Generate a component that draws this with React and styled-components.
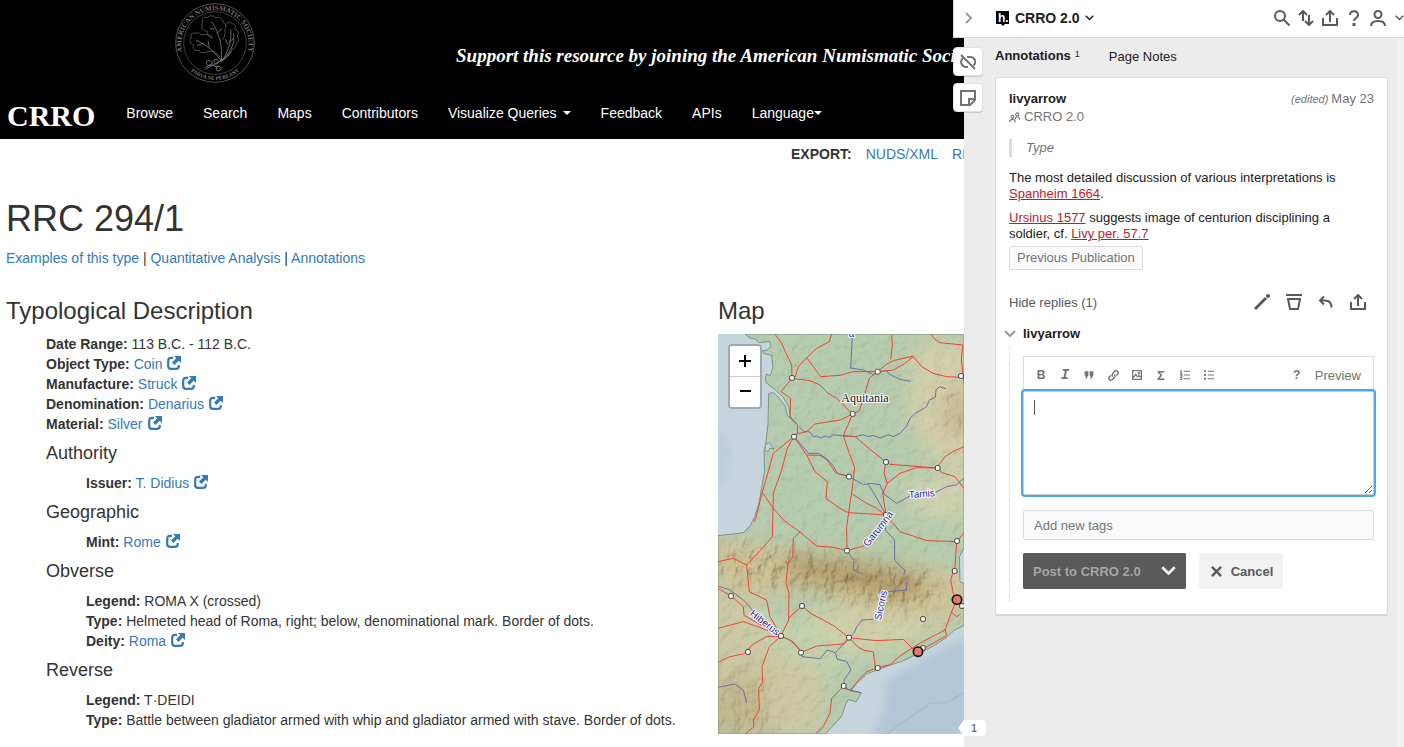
import React from "react";
import styled, { createGlobalStyle } from "styled-components";

const GlobalStyle = createGlobalStyle`
  * {
    box-sizing: border-box;
  }
  body {
    margin: 0;
    background: #fff;
    color: #333;
    font-family: "Liberation Sans", Arial, sans-serif;
    font-size: 14px;
    line-height: 20px;
  }
  button, input, textarea {
    font-family: inherit;
  }
`

const Shell = styled.div`
  display: flex;
  min-height: 100vh;
  overflow: hidden;
`
const Page = styled.main`
  flex: 1;
  min-width: 0;
  overflow: hidden;
`
const Link = styled.a`
  color: #337ab7;
  text-decoration: none;
`

/* ---------- header ---------- */
const Header = styled.header`
  background: #000;
  color: #fff;
  padding: 3px 0 1px;
`
const Banner = styled.div`
  display: grid;
  grid-template-columns: 430px 1fr;
  align-items: center;
  height: 85px;
`
const Seal = styled.svg`
  width: 80px;
  height: 80px;
  justify-self: center;
  align-self: start;
`
const Slogan = styled.a`
  padding: 20px 0 0 26px;
  color: #fff;
  font: italic bold 19px/28px "Liberation Serif", serif;
  text-decoration: none;
  white-space: nowrap;
`
const Nav = styled.nav`
  display: flex;
  align-items: center;
  height: 50px;
  padding-left: 7px;
`
const Brand = styled.a`
  margin-right: 16px;
  padding-top: 6px;
  color: #fff;
  font: bold 30px/30px "Liberation Serif", serif;
  text-decoration: none;
`
const NavLink = styled.a`
  display: flex;
  align-items: center;
  gap: ${(p) => (p.$tight ? "0" : "6px")};
  padding: 15px;
  color: #fff;
  text-decoration: none;
  white-space: nowrap;
`
const Caret = styled.span`
  border: 4px solid transparent;
  border-top-color: #fff;
  border-bottom: 0;
`

/* ---------- record ---------- */
const Exports = styled.div`
  display: flex;
  gap: 14px;
  padding: 5px 0 0 791px;
  white-space: nowrap;
`
const Record = styled.div`
  padding-left: 6px;
`
const Title = styled.h1`
  margin: 35px 0 9px;
  font-size: 36px;
  font-weight: normal;
  line-height: 40px;
`
const Columns = styled.div`
  display: grid;
  grid-template-columns: 1fr 246px;
  margin-top: 30px;
`
const SectionTitle = styled.h3`
  margin: 0 0 10px;
  font-size: 24px;
  font-weight: normal;
  line-height: 26px;
`
const Group = styled.section`
  padding-left: 40px;
`
const GroupTitle = styled.h4`
  margin: 10px 0;
  font-size: 18px;
  font-weight: normal;
  line-height: 19px;
`
const List = styled.ul`
  margin: 0;
  padding: 0 0 0 ${(p) => (p.$nested ? "40px" : "0")};
  list-style: none;
`

/* ---------- map ---------- */
const MapBox = styled.div`
  position: relative;
  height: 400px;
  overflow: hidden;
`
const MapSvg = styled.svg`
  display: block;
  width: 246px;
  height: 400px;
`
const Zoom = styled.div`
  position: absolute;
  top: 10px;
  left: 10px;
  border: 2px solid rgba(0, 0, 0, 0.2);
  border-radius: 4px;
`
const ZoomButton = styled.button`
  display: block;
  width: 30px;
  height: ${(p) => (p.$first ? "31px" : "30px")};
  padding: 0;
  border: 0;
  border-bottom: ${(p) => (p.$first ? "1px solid #ccc" : "0")};
  border-radius: ${(p) => (p.$first ? "2px 2px 0 0" : "0 0 2px 2px")};
  background: #fff;
  color: #000;
`

/* ---------- sidebar ---------- */
const Sidebar = styled.aside`
  position: relative;
  width: 440px;
  background: #ececec;
  border-right: 7px solid #f0f0f0;
  color: #202020;
  font-size: 13px;
  line-height: 18px;
`
const TopBar = styled.div`
  display: flex;
  align-items: center;
  height: 38px;
  margin-right: -7px;
  padding: 0 0 2px 31px;
  border-bottom: 1px solid #dbdbdb;
  background: #fff;
`
const IconButton = styled.button`
  display: flex;
  align-items: center;
  justify-content: center;
  width: 24px;
  height: 24px;
  padding: 0;
  border: 0;
  background: none;
  color: ${(p) => p.$color || "#595959"};
  font: ${(p) => p.$font || "inherit"};
`
const MenuArrow = styled(IconButton)`
  justify-content: flex-end;
  width: 14px;
`
const GroupButton = styled.button`
  display: flex;
  align-items: center;
  gap: 5px;
  margin-right: auto;
  padding: 0;
  border: 0;
  background: none;
  color: #202020;
  font-size: 14px;
  font-weight: bold;
`
const Handle = styled.div`
  position: absolute;
  top: 0;
  left: -11px;
  display: flex;
  flex-direction: column;
  gap: 7px;
`
const HandleToggle = styled.button`
  display: flex;
  align-items: center;
  justify-content: center;
  width: 32px;
  height: 38px;
  margin-bottom: 2px;
  padding: 0 4px 2px 0;
  border: 1px solid #dbdbdb;
  border-width: 0 0 1px 1px;
  background: #fff;
  color: #9c9c9c;
`
const HandleButton = styled.button`
  display: flex;
  align-items: center;
  justify-content: center;
  width: 30px;
  height: 29px;
  padding: 0;
  border: 1px solid #e3e3e3;
  border-radius: 4px;
  background: #fff;
  color: #737373;
  box-shadow: 0 1px 1px rgba(0, 0, 0, 0.15);
`
const Bucket = styled.button`
  position: absolute;
  left: -6px;
  bottom: 11px;
  width: 28px;
  height: 16px;
  padding: 0 0 0 4px;
  border: 0;
  border-radius: 3px;
  background: #fff;
  clip-path: polygon(0 50%, 6px 0, 100% 0, 100% 100%, 6px 100%);
  color: #737373;
  font-size: 10px;
  font-weight: bold;
`
const Tabs = styled.div`
  display: flex;
  align-items: flex-start;
  gap: 29px;
  height: 39px;
  padding: 9px 0 0 31px;
`
const Tab = styled.button`
  display: flex;
  gap: 4px;
  padding: 0;
  border: 0;
  background: none;
  color: #202020;
  font-size: 13px;
  font-weight: ${(p) => (p.$active ? "bold" : "normal")};
  line-height: ${(p) => (p.$active ? 18 : 20)}px;
`
const Count = styled.span`
  font-size: 9px;
  font-weight: normal;
  line-height: 15px;
`
const Card = styled.article`
  margin: 0 9px 0 31px;
  padding: 12px 13px;
  border: 1px solid #dbdbdb;
  border-radius: 2px;
  background: #fff;
  box-shadow: 0 1px 1px rgba(0, 0, 0, 0.1);
`
const Row = styled.div`
  display: flex;
  align-items: center;
  gap: ${(p) => p.$gap || 0}px;
  margin-left: ${(p) => (p.$end ? "auto" : "0")};
`
const User = styled.strong`
  flex: 1;
  color: #202020;
`
const Muted = styled.span`
  color: #737373;
`
const Edited = styled.em`
  margin-right: 3px;
  font-size: 11px;
`
const Quote = styled.blockquote`
  margin: 13px 0;
  padding-left: 14px;
  border-left: 3px solid #dbdbdb;
  color: #737373;
  font-style: italic;
`
const Text = styled.p`
  margin: 0 0 ${(p) => (p.$last ? 4 : 8)}px;
  line-height: 16px;
  a {
    color: #bd1c2b;
  }
`
const Tag = styled.a`
  display: inline-block;
  padding: 2px 7px;
  border: 1px solid #dbdbdb;
  border-radius: 2px;
  background: #fafafa;
  color: #737373;
  text-decoration: none;
`
const Actions = styled.div`
  display: flex;
  align-items: center;
  gap: 8px;
  height: 24px;
  margin: 20px 4px 11px 0;
`
const TextButton = styled.button`
  margin-right: ${(p) => (p.$push ? "auto" : "0")};
  padding: 0;
  border: 0;
  background: none;
  color: ${(p) => p.$color || "#737373"};
  font-size: 13px;
`
const Thread = styled.div`
  display: grid;
  grid-template-columns: 19px 1fr;
  margin-left: -5px;
`
const Collapse = styled.button`
  display: flex;
  align-items: center;
  padding: 0;
  border: 0;
  background: none;
  color: #9c9c9c;
`
const Line = styled.div`
  margin: 4px 0 0 5px;
  border-left: 1px dashed #dbdbdb;
`
const Editor = styled.form`
  display: flex;
  flex-direction: column;
  padding: 13px 0;
`
const Tools = styled.div`
  display: flex;
  align-items: center;
  height: 35px;
  padding: 2px 12px 0 5px;
  border: 1px solid #dbdbdb;
  border-bottom: 0;
`
const TextArea = styled.textarea`
  display: block;
  width: 100%;
  height: 104px;
  padding: 8px 10px;
  border: 1px solid #ccc;
  border-radius: 2px;
  outline: none;
  box-shadow: 0 0 0 2px #51a7e8;
  background: linear-gradient(#555, #555) 10px 8px / 1px 15px no-repeat #fff;
  caret-color: transparent;
  font-size: 13px;
  resize: vertical;
`
const TagInput = styled.input`
  height: 30px;
  margin: 15px 0 13px;
  padding: 0 10px;
  border: 1px solid #dbdbdb;
  border-radius: 2px;
  background: #fafafa;
  font-size: 13px;
  &::placeholder {
    color: #757575;
  }
`
const Split = styled.div`
  display: flex;
  border-radius: 2px;
  background: #595959;
`
const Button = styled.button`
  display: flex;
  align-items: center;
  gap: 9px;
  height: 36px;
  padding: ${(p) => p.$pad || "0 10px"};
  border: 0;
  border-radius: 2px;
  background: ${(p) => (p.$dark ? "#595959" : "#f2f2f2")};
  color: ${(p) => p.$color || "#595959"};
  font-size: 13px;
  font-weight: bold;
`

/* ---------- icons ---------- */
const IconSvg = styled.svg`
  display: block;
  flex: none;
`
const Icon = ({ size = 16, h, box = "0 0 16 16", sw = 2, children }) => (
  <IconSvg
    width={size}
    height={h || size}
    viewBox={box}
    fill="none"
    stroke="currentColor"
    strokeWidth={sw}
    aria-hidden="true"
  >
    {children}
  </IconSvg>
)
const Chevron = ({ size = 9, sw = 2 }) => (
  <Icon size={size} h={Math.round(size * 0.66)} box="0 0 12 8" sw={sw}>
    <path d="M1 1l5 5 5-5" />
  </Icon>
)
const ShareIcon = () => (
  <Icon>
    <path d="M1 8v7h14V8M8 12V1M4 5l4-4 4 4" />
  </Icon>
)
const NewWindow = styled(({ className }) => (
  <svg className={className} viewBox="0 0 14 14" aria-hidden="true">
    <path d="M6 1.800H4Q1.200 1.800 1.200 4.600v5.400q0 2.800 2.800 2.800h5q2.800 0 2.800-2.800V9" fill="none" stroke="#337ab7" strokeWidth="2.200" />
    <path d="M7 0h7v7l-2.300-2.300L7.400 9 5 6.600l4.300-4.300z" fill="#337ab7" />
  </svg>
))`
  width: 14px;
  height: 14px;
  margin-left: 5px;
  vertical-align: -1px;
`

const AnsSeal = () => (
  <Seal viewBox="525 9 240 240" fill="none" stroke="#606060" strokeWidth="2.500" role="img" aria-label="American Numismatic Society">
    <circle cx="645" cy="129" r="118" />
    <circle cx="645" cy="129" r="94" strokeWidth="2" />
    <path id="arcTop" d="M550 166A101 101 0 1 1 740 166" stroke="none" />
    <path id="arcBottom" d="M555 194A111 111 0 0 0 735 194" stroke="none" />
    <g fill="#767676" stroke="none" fontFamily="Liberation Serif, serif" fontWeight="bold">
      <text fontSize="21">
        <textPath href="#arcTop" startOffset="50%" textAnchor="middle">AMERICAN NUMISMATIC SOCIETY</textPath>
      </text>
      <text fontSize="16">
        <textPath href="#arcBottom" startOffset="50%" textAnchor="middle">PARVA NE PEREANT</textPath>
      </text>
    </g>
    <path d="M664 180C655 160 640 150 622 155c-10 6-22 4-25-4-14 4-22-8-16-16-12-3-14-17-6-22-7-8 0-16 10-13 8-4 16-1 18 5 14-4 28-2 36 9M639 114c-12-1-20-10-17-20-14-2-22-14-14-23-5-12 2-20 14-19 6-6 20-6 24 1 13-3 24 4 23 14 10 4 11 16 5 22 4 12-1 22-6 30M676 78c2-11 14-14 20-7 10 0 12 8 8 15 12 5 14 15 7 22 8 8 5 19-3 22 2 10-5 17-12 18-4 14-14 24-30 31" />
    <path d="M664 184c2-30 0-60-10-80-4-12-10-28-20-40M650 100l16-14M644 88l-16-4M664 184c-16-24-36-44-76-64M628 142l-4-20M610 130l-18 6M666 184c14-24 30-52 26-96M686 126l16-10M684 134l-8-16M700 100c6 26-4 50-32 82M616 208l54-30M670 180l24-24" stroke="#7c7c7c" />
    <path d="M620 184c8-6 18 0 16 8-10 8-20 2-16-8zM642 180c8-4 16 0 14 8-8 8-16 2-14-8zM650 200c8-4 16 2 12 10-8 6-16 0-12-10zM634 196l20 4M616 202l18-8" strokeWidth="3" stroke="#7c7c7c" />
  </Seal>
)

/* the map is drawn at three units to the pixel */
const land =
  "M135 132L150 144 165 147 178 158 208 154 213 168 202 180 188 182 190 190 215 196 219 232 210 258 200 252 196 262 198 278 222 296 250 322 266 350 270 378 288 402 262 376 256 348 232 318 218 306 206 312 204 400 198 456 192 486 194 540 184 600 176 642 164 680 150 708 130 728 100 732 54 737V1332H376L398 1308 424 1280 438 1240 446 1228 468 1236 484 1208 452 1204 470 1180 500 1152 540 1136 610 1112 660 1088 700 1068 740 1042 764 1020 792 1006V880L780 876 778 800 792 774V132Z"

const roads = [
  "M225 132L245 160 258 190 275 225 276 263",
  "M395 132L388 155 350 175 320 203 295 230 285 262",
  "M320 203L362 260 420 256 460 245 533 245 560 222 580 212 640 198",
  "M575 132L577 165 572 208M533 245L580 240 612 222 640 200 665 230 700 250 740 260 783 262",
  "M692 132L705 148 720 158 788 165 784 210 792 280",
  "M276 265L330 272 360 285 382 308 410 325 458 372",
  "M276 265L243 305 272 325 270 380 292 404 292 430 282 440",
  "M533 245L508 265 492 320 478 362 458 372 430 437 448 490 464 532 456 600 446 668 440 710 441 782",
  "M458 372L420 390 345 402 320 425 290 432 282 440",
  "M430 437L466 440 500 470 558 516 570 523 713 534",
  "M713 530L735 500 760 484 792 470",
  "M558 516L552 550 562 580 548 610 558 675",
  "M562 580L600 550 650 533 713 534 725 548 765 560 792 595",
  "M282 440L320 495 360 496 382 510 406 548 447 560",
  "M282 440L220 490 206 540 186 610 168 682 162 696",
  "M282 440L262 475 242 550 220 610 217 740 178 785 140 825 120 815 100 805 54 815",
  "M320 495L345 545 382 575 378 625 420 655 445 668 558 675",
  "M186 606L220 655 250 690 300 726 350 768 400 772 441 782",
  "M454 610L500 640 530 655 558 675",
  "M300 726L280 745 278 800 264 820 258 880 267 910 266 990 243 1038",
  "M441 782L490 768 530 730 558 675 600 725 680 752 770 755 792 728",
  "M770 753L765 830 752 870 760 910 770 930",
  "M140 825L148 905 200 930 210 980 243 1038",
  "M54 895L93 918 130 950 132 976 175 1000 243 1038",
  "M54 1015L130 995 200 1020 243 1038",
  "M54 1117L90 1100 130 1092 160 1062 200 1040 243 1038",
  "M243 1038L208 1070 186 1130 188 1176 176 1196 178 1260 160 1290 162 1310 135 1332",
  "M265 985L306 948 335 972 370 990 402 1008 447 1043 530 1052 610 1048 640 1078 654 1085",
  "M447 1043L432 1062 350 1068 303 1088 280 1056 243 1038",
  "M447 1043L475 1072 495 1082 520 1085 526 1134",
  "M431 1188L450 1202 480 1165 500 1145 533 1133 570 1124 600 1098 640 1072 668 1055 735 1020 755 965 770 930",
  "M668 1078L740 1036 735 1018M752 965L770 980 782 972",
  "M431 1188L395 1225 390 1268 370 1310 346 1332",
]
const rivers = [
  "M457 140L452 234 490 240 520 254 560 240 566 252 600 268 632 274",
  "M738 296L718 290 708 300 706 322 688 330 680 350 646 370 630 385 620 408 600 430 580 440 564 434 540 444 520 436 504 440 490 434 466 440 430 438 400 434 388 442 376 438 362 444 350 438 340 440 330 426 312 424 298 412",
  "M282 440L326 490 356 490 380 506 400 528 412 550 447 560 490 584 512 580 540 584 552 612 590 640 630 618",
  "M504 582L530 624 558 675 556 720 584 750 584 812 614 840 612 856",
  "M700 610L740 590 770 584 792 564",
  "M617 872L620 900 560 906M520 988L486 990 470 1010 462 1030 440 1052 406 1088 412 1108 440 1114 453 1140 432 1170 434 1196 484 1208",
  "M303 1088L306 1100 360 1106 382 1080 406 1088M243 1038L270 1050 300 1078",
  "M54 888L90 900 130 930 150 950 160 966M54 1192L104 1182 130 1200 140 1238",
  "M441 782L462 812 460 840 488 852",
]
const towns = [
  [276, 264], [533, 245], [783, 258], [458, 372], [282, 440], [558, 516], [713, 534], [447, 560], [558, 675],
  [441, 782], [771, 753], [764, 843], [93, 918], [306, 948], [669, 987], [243, 1038], [447, 1043], [144, 1086],
  [303, 1088], [533, 1134], [431, 1188], [786, 948], [669, 1074],
]

const Blend = styled.g`
  mix-blend-mode: multiply;
`

const BaseMap = () => (
  <MapSvg viewBox="54 132 738 1200" role="img" aria-label="Map of Aquitania">
    <defs>
      <clipPath id="landClip"><path d={land} /></clipPath>
      <filter id="blur"><feGaussianBlur stdDeviation="30" /></filter>
      <filter id="soft"><feGaussianBlur stdDeviation="12" /></filter>
      <filter id="relief" x="0" y="0" width="100%" height="100%">
        <feTurbulence type="fractalNoise" baseFrequency=".035" numOctaves="5" seed="8" />
        <feDiffuseLighting surfaceScale="8" diffuseConstant="1.180" lightingColor="#fff">
          <feDistantLight azimuth="225" elevation="58" />
        </feDiffuseLighting>
      </filter>
      <filter id="ridge" x="0" y="0" width="100%" height="100%">
        <feTurbulence type="fractalNoise" baseFrequency=".036 .022" numOctaves="4" seed="3" />
        <feDiffuseLighting surfaceScale="20" diffuseConstant="1.180" lightingColor="#fff6e0">
          <feDistantLight azimuth="225" elevation="58" />
        </feDiffuseLighting>
      </filter>
      <mask id="ridgeMask">
        <g filter="url(#blur)">
          <path d="M70 760L270 780 440 810 700 850 740 930 600 970 420 930 260 900 60 870Z" fill="#fff" />
          <path d="M700 290L800 260V500L720 440Z" fill="#666" />
          <path d="M40 1130L200 1100 240 1340H40Z" fill="#666" />
        </g>
      </mask>
    </defs>
    <rect x="54" y="132" width="738" height="1200" fill="#c6d5dd" />
    <path d="M560 1170L548 1270 510 1340H800V1040L700 1090Z" fill="#b3c6d7" filter="url(#soft)" />
    <path d="M50 400L90 470 80 560 50 620Z" fill="#bbcbd9" filter="url(#soft)" />
    <path d="M560 1332L600 1302 660 1262 690 1240 740 1238 792 1208" fill="none" stroke="#a7b9cd" strokeWidth="4" />
    <g clipPath="url(#landClip)">
      <rect x="54" y="132" width="738" height="1200" fill="#b6ccae" />
      <g filter="url(#blur)">
        <path d="M640 160H830V560L700 500 620 380 640 220Z" fill="#d3cfab" />
        <path d="M740 320L810 290V440L740 420Z" fill="#c8b992" />
        <path d="M600 580L800 540V700L640 670Z" fill="#d0d1ae" />
        <path d="M30 740L230 770 440 800 800 850V960L720 1010 560 960 300 900 190 920 30 870Z" fill="#d0c59c" />
        <path d="M250 795L430 815 640 850 700 900 600 930 430 890 270 860Z" fill="#b39b6d" />
        <path d="M30 880L190 930 220 1030 380 1130 360 1340H30Z" fill="#cdc9a5" />
        <path d="M30 1180L180 1150 200 1340H30Z" fill="#c2ba91" />
        <path d="M440 940L720 980 640 1060 450 1110 300 980Z" fill="#cfd0a9" />
        <path d="M150 935L300 1000 440 1060 430 1160 300 1110 160 1040Z" fill="#c2d1ae" />
      </g>
      <Blend opacity=".25">
        <rect x="54" y="132" width="738" height="1200" filter="url(#relief)" />
      </Blend>
      <Blend opacity=".45" mask="url(#ridgeMask)">
        <rect x="54" y="132" width="738" height="1200" filter="url(#ridge)" />
      </Blend>
    </g>
    <path d={land} fill="none" stroke="#7c9484" strokeWidth="3" />
    <path d="M194 482L198 462 208 458 222 478 210 474 206 484Z" fill="#c6d5dd" stroke="#7c9484" strokeWidth="3" />
    <g fill="none" stroke="#6a70a4" strokeWidth="3" strokeLinejoin="round">
      {rivers.map((d) => <path key={d} d={d} />)}
    </g>
    <g fill="none" stroke="#ee4438" strokeWidth="3" strokeLinejoin="round">
      {roads.map((d) => <path key={d} d={d} />)}
    </g>
    {towns.map(([x, y]) => (
      <rect key={`${x}-${y}`} x={x - 7} y={y - 7} width="14" height="14" rx="4" fill="#fff" stroke="#444" strokeWidth="3" />
    ))}
    <g fill="#e8695f" fillOpacity=".75" stroke="#111" strokeWidth="5">
      <circle cx="771" cy="929" r="14" />
      <circle cx="654" cy="1085" r="14" />
    </g>
    <g stroke="#fff" strokeWidth="6" strokeLinejoin="round" paintOrder="stroke" fontFamily="Liberation Sans, sans-serif" fontSize="30" fill="#1c1c9c">
      <text x="424" y="336" fontFamily="Liberation Serif, serif" fontSize="36" fill="#111">Aquitania</text>
      <text x="446" y="142">a</text>
      <text transform="translate(627 624) rotate(-4)">Tamis</text>
      <text transform="translate(504 772) rotate(-52)">Garumna</text>
      <text transform="translate(542 992) rotate(-77)">Sicoris</text>
      <text transform="translate(148 974) rotate(38)">Hiberus</text>
    </g>
  </MapSvg>
)

const Field = ({ label, value, link }) => (
  <li>
    <b>{label}:</b>{" "}
    {link ? <><Link href="#">{value}</Link><Link href="#" aria-label={`Open ${value}`}><NewWindow /></Link></> : value}
  </li>
)

const navItems = ["Browse", "Search", "Maps", "Contributors", "Visualize Queries", "Feedback", "APIs", "Language"]

const sections = [
  { fields: [
    { label: "Date Range", value: "113 B.C. - 112 B.C." },
    { label: "Object Type", value: "Coin", link: true },
    { label: "Manufacture", value: "Struck", link: true },
    { label: "Denomination", value: "Denarius", link: true },
    { label: "Material", value: "Silver", link: true },
  ] },
  { title: "Authority", fields: [{ label: "Issuer", value: "T. Didius", link: true }] },
  { title: "Geographic", fields: [{ label: "Mint", value: "Rome", link: true }] },
  { title: "Obverse", fields: [
    { label: "Legend", value: "ROMA X (crossed)" },
    { label: "Type", value: "Helmeted head of Roma, right; below, denominational mark. Border of dots." },
    { label: "Deity", value: "Roma", link: true },
  ] },
  { title: "Reverse", fields: [
    { label: "Legend", value: "T·DEIDI" },
    { label: "Type", value: "Battle between gladiator armed with whip and gladiator armed with stave. Border of dots." },
  ] },
]

const CoinPage = () => (
  <Page>
    <Header>
      <Banner>
        <AnsSeal />
        <Slogan href="#">Support this resource by joining the American Numismatic Society</Slogan>
      </Banner>
      <Nav>
        <Brand href="#">CRRO</Brand>
        {navItems.map((item) => (
          <NavLink key={item} href="#" $tight={item === "Language"}>
            {item}
            {(item === "Visualize Queries" || item === "Language") && <Caret />}
          </NavLink>
        ))}
      </Nav>
    </Header>
    <Exports>
      <b>EXPORT:</b>
      <Link href="#">NUDS/XML</Link>
      <Link href="#">RDF/XML</Link>
    </Exports>
    <Record>
      <Title>RRC 294/1</Title>
      <div>
        <Link href="#">Examples of this type</Link> | <Link href="#">Quantitative Analysis</Link> | <Link href="#">Annotations</Link>
      </div>
      <Columns>
        <div>
          <SectionTitle>Typological Description</SectionTitle>
          {sections.map(({ title, fields }) => (
            <Group key={title || "main"}>
              {title && <GroupTitle>{title}</GroupTitle>}
              <List $nested={!!title}>
                {fields.map((field) => <Field key={field.label} {...field} />)}
              </List>
            </Group>
          ))}
        </div>
        <div>
          <SectionTitle>Map</SectionTitle>
          <MapBox>
            <BaseMap />
            <Zoom>
              <ZoomButton $first aria-label="Zoom in">
                <Icon size={30} box="0 0 30 30"><path d="M9 15h12M15 9v12" /></Icon>
              </ZoomButton>
              <ZoomButton aria-label="Zoom out">
                <Icon size={30} box="0 0 30 30"><path d="M10 14h11" /></Icon>
              </ZoomButton>
            </Zoom>
          </MapBox>
        </div>
      </Columns>
    </Record>
  </Page>
)

const ReplyEditor = () => (
  <Editor onSubmit={(e) => e.preventDefault()}>
    <Tools>
      <IconButton type="button" $color="#737373" $font="bold 12px 'Liberation Sans', sans-serif" aria-label="Bold">B</IconButton>
      <IconButton type="button" $color="#737373" $font="italic bold 14px 'Liberation Mono', monospace" aria-label="Italic">I</IconButton>
      <IconButton type="button" $color="#737373" aria-label="Quote">
        <Icon size={10}><path d="M1 2h6v6l-3 6H2l1-5H1zM9 2h6v6l-3 6h-2l1-5H9z" fill="currentColor" stroke="none" /></Icon>
      </IconButton>
      <IconButton type="button" $color="#737373" aria-label="Link">
        <Icon size={11}><path d="M7 9.500c-1.500-1-1.500-3 0-4.500l2.500-3c1.500-1.500 3.500-1 4.500 0s1 3-.5 4.500L12 8M9 6.500c1.500 1 1.500 3 0 4.500l-2.500 3c-1.500 1.500-3.500 1-4.500 0s-1-3 .5-4.500L4 8" /></Icon>
      </IconButton>
      <IconButton type="button" $color="#737373" aria-label="Image">
        <Icon size={10}><path d="M1 1h14v14H1zM2 12l4-5 3 4 2-2 3 3" /><circle cx="11" cy="5" r="1" /></Icon>
      </IconButton>
      <IconButton type="button" $color="#737373" $font="bold 13px 'Liberation Sans', sans-serif" aria-label="Equation">Σ</IconButton>
      <IconButton type="button" $color="#737373" aria-label="Numbered list">
        <Icon size={10} sw={1.6}><path d="M6 2h10M6 8h10M6 14h10M0 1h2v4M0 5h4M0 7h3v2H1v1h3M0 12h3v3H0" /></Icon>
      </IconButton>
      <IconButton type="button" $color="#737373" aria-label="Bulleted list">
        <Icon size={10} sw={1.6}><path d="M6 2h10M6 8h10M6 14h10" /><path d="M0 2h3M0 8h3M0 14h3" strokeWidth="3" /></Icon>
      </IconButton>
      <Row $end $gap={6}>
        <IconButton type="button" $color="#737373" $font="bold 12px 'Liberation Sans', sans-serif" aria-label="Formatting help">?</IconButton>
        <TextButton type="button">Preview</TextButton>
      </Row>
    </Tools>
    <TextArea aria-label="Reply" />
    <TagInput aria-label="Tags" placeholder="Add new tags" />
    <Row $gap={13}>
      <Split>
        <Button $dark $color="#a6a6a6" disabled>Post to CRRO 2.0</Button>
        <Button $dark $color="#fff" type="button" aria-label="Choose visibility">
          <Chevron size={15} />
        </Button>
      </Split>
      <Button type="button" $pad="0 10px 0 12px">
        <Icon size={11} box="0 0 12 12"><path d="M1 1l10 10M11 1L1 11" strokeWidth="2.500" /></Icon>
        Cancel
      </Button>
    </Row>
  </Editor>
)

const Annotation = () => (
  <Card>
    <Row>
      <User>livyarrow</User>
      <Muted><Edited>(edited)</Edited>May 23</Muted>
    </Row>
    <Row $gap={4}>
      <Muted>
        <Icon size={11} sw={1.6}>
          <path d="M1 15c0-3 1-4 4-4s4 1 4 4M9 11c0-3 .5-4 3-4s3.500 1 3.500 4" />
          <circle cx="5" cy="7" r="2.200" /><circle cx="12" cy="3.500" r="2.200" />
        </Icon>
      </Muted>
      <Muted>CRRO 2.0</Muted>
    </Row>
    <Quote>Type</Quote>
    <Text>The most detailed discussion of various interpretations is <a href="#">Spanheim 1664</a>.</Text>
    <Text $last><a href="#">Ursinus 1577</a> suggests image of centurion disciplining a soldier, cf. <a href="#">Livy per. 57.7</a></Text>
    <Row><Tag href="#">Previous Publication</Tag></Row>
    <Actions>
      <TextButton $push $color="#595959">Hide replies (1)</TextButton>
      <IconButton aria-label="Edit">
        <Icon><path d="M1 15L12 4" strokeWidth="3" /><path d="M14 2h.01" strokeWidth="4" strokeLinecap="round" /></Icon>
      </IconButton>
      <IconButton aria-label="Delete">
        <Icon><path d="M0 1h16M2 5h12l-2 10H4z" /></Icon>
      </IconButton>
      <IconButton aria-label="Reply">
        <Icon><path d="M6 2.500L2 6.500l4 4M2 6.500h5c4 0 6.500 2.500 6.500 7" /></Icon>
      </IconButton>
      <IconButton aria-label="Share"><ShareIcon /></IconButton>
    </Actions>
    <Thread>
      <Collapse aria-label="Collapse replies"><Chevron size={12} /></Collapse>
      <User>livyarrow</User>
      <Line />
      <ReplyEditor />
    </Thread>
  </Card>
)

const AnnotationSidebar = () => (
  <Sidebar>
    <TopBar>
      <GroupButton>
        <svg width="15" height="17" viewBox="0 0 15 17" aria-hidden="true">
          <path d="M1 2h13v13h-4l-2 2-2-2H1z" fill="#000" />
          <text x="3" y="13" fill="#fff" fontSize="12" fontWeight="bold" fontFamily="Liberation Sans, sans-serif">h.</text>
        </svg>
        CRRO 2.0
        <Chevron />
      </GroupButton>
      <IconButton aria-label="Search">
        <Icon><circle cx="6" cy="6" r="5" /><path d="M9.500 9.500l6 6" /></Icon>
      </IconButton>
      <IconButton aria-label="Sort">
        <Icon><path d="M5 11V1M1 5l4-4 4 4M11 5v10M7 11l4 4 4-4" /></Icon>
      </IconButton>
      <IconButton aria-label="Share"><ShareIcon /></IconButton>
      <IconButton aria-label="Help">
        <Icon><path d="M4 5c0-5 8-5 8 0 0 3-4 3-4 6" /><path d="M8 13v3" strokeWidth="3" /></Icon>
      </IconButton>
      <IconButton aria-label="Account">
        <Icon><circle cx="8" cy="4.500" r="3.500" /><path d="M1 16c0-4 3-5 7-5s7 1 7 5" /></Icon>
      </IconButton>
      <MenuArrow aria-label="Account menu"><Chevron /></MenuArrow>
    </TopBar>
    <Handle>
      <HandleToggle aria-label="Close sidebar">
        <Icon size={10} h={12} box="0 0 10 12"><path d="M3 1l5 5-5 5" /></Icon>
      </HandleToggle>
      <HandleButton aria-label="Hide highlights">
        <Icon><path d="M1 1l14 14M3 4C-.5 7 1 12.500 6 13h2M7 3h3c5 0 7 5.500 3.500 8.500" /></Icon>
      </HandleButton>
      <HandleButton aria-label="New page note">
        <Icon><path d="M1 1h14v9l-5 5H1zM15 9H9v6" /></Icon>
      </HandleButton>
    </Handle>
    <Tabs>
      <Tab $active>Annotations<Count>1</Count></Tab>
      <Tab>Page Notes</Tab>
    </Tabs>
    <Annotation />
    <Bucket>1</Bucket>
  </Sidebar>
)

const App = () => (
  <>
    <GlobalStyle />
    <Shell>
      <CoinPage />
      <AnnotationSidebar />
    </Shell>
  </>
)

export default App
